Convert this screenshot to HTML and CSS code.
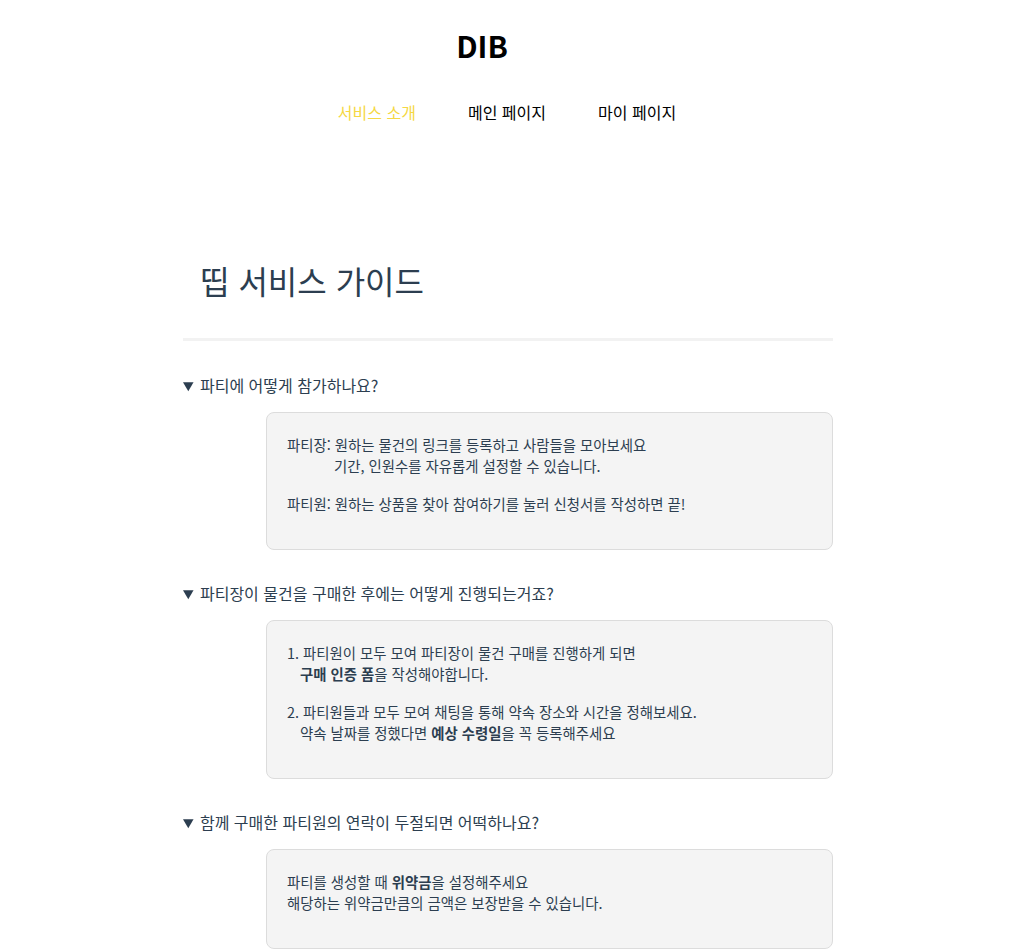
FILE: index.html
```html
<!DOCTYPE html>
<html lang="ko">
<head>
<meta charset="utf-8">
<title>DIB</title>
<link rel="stylesheet" href="styles.css">
</head>
<body>
<header class="header">
  <h1 class="logo">DIB</h1>
  <nav class="nav">
    <a class="nav-link active" href="#">서비스 소개</a>
    <a class="nav-link" href="#">메인 페이지</a>
    <a class="nav-link" href="#">마이 페이지</a>
  </nav>
</header>
<main class="guide">
  <h2 class="guide-title">띱 서비스 가이드</h2>
  <hr class="divider">
  <details class="faq" open>
    <summary class="faq-q">파티에 어떻게 참가하나요?</summary>
    <div class="faq-a">
      <p>파티장: 원하는 물건의 링크를 등록하고 사람들을 모아보세요<br><span class="indent-long">기간, 인원수를 자유롭게 설정할 수 있습니다.</span></p>
      <p>파티원: 원하는 상품을 찾아 참여하기를 눌러 신청서를 작성하면 끝!</p>
    </div>
  </details>
  <details class="faq" open>
    <summary class="faq-q">파티장이 물건을 구매한 후에는 어떻게 진행되는거죠?</summary>
    <div class="faq-a">
      <p>1. 파티원이 모두 모여 파티장이 물건 구매를 진행하게 되면<br><span class="indent-short"><b>구매 인증 폼</b>을 작성해야합니다.</span></p>
      <p>2. 파티원들과 모두 모여 채팅을 통해 약속 장소와 시간을 정해보세요.<br><span class="indent-short">약속 날짜를 정했다면 <b>예상 수령일</b>을 꼭 등록해주세요</span></p>
    </div>
  </details>
  <details class="faq" open>
    <summary class="faq-q">함께 구매한 파티원의 연락이 두절되면 어떡하나요?</summary>
    <div class="faq-a">
      <p>파티를 생성할 때 <b>위약금</b>을 설정해주세요<br>해당하는 위약금만큼의 금액은 보장받을 수 있습니다.</p>
    </div>
  </details>
</main>
</body>
</html>
```
FILE: styles.css
```css
html, body {
  margin: 0;
  padding: 0;
  background: #ffffff;
}
body {
  font-family: "Noto Sans CJK KR", "Noto Sans", sans-serif;
  color: #2c3e50;
}
.header {
  display: flex;
  flex-direction: column;
  align-items: center;
  padding-top: 25px;
}
.logo {
  margin: 0 0 0 -48px;
  font-size: 30px;
  line-height: 40px;
  font-weight: 700;
  color: #000;
}
.nav {
  display: flex;
  gap: 52px;
  margin-top: 35px;
  margin-left: 2px;
}
.nav-link {
  font-size: 16px;
  line-height: 24px;
  color: #000;
  text-decoration: none;
}
.nav-link.active {
  color: #f5d843;
}
.guide {
  width: 650px;
  margin: 136px auto 0;
  position: relative;
  left: 2px;
}
.guide-title {
  margin: 0;
  padding-left: 17px;
  font-size: 32px;
  line-height: 40px;
  font-weight: 400;
  color: #2c3e50;
}
.divider {
  margin: 38px 0 0;
  border: 0;
  height: 3px;
  background: #f2f2f2;
}
.faq {
  margin-top: 33px;
}
.faq + .faq {
  margin-top: 32px;
}
.faq-q {
  font-size: 16px;
  line-height: 22px;
  cursor: pointer;
}
.faq-a {
  margin: 16px 0 0 83px;
  padding: 21px 20px 35px;
  background: #f4f4f4;
  border: 1px solid #dcdcdc;
  border-radius: 8px;
  display: flex;
  flex-direction: column;
  gap: 17px;
}
.faq-a p {
  margin: 0;
  font-size: 14.4px;
  line-height: 21px;
}
.faq-a b {
  font-weight: 700;
  color: #2c3e50;
}
.indent-long {
  padding-left: 47px;
}
.indent-short {
  padding-left: 13px;
}
```
